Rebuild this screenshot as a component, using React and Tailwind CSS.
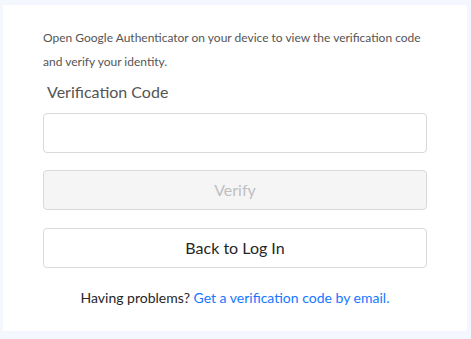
export default function App() {
  return (
    <div className="min-h-screen w-full bg-[#f4f7fe] pt-[5px] pl-[3px] pr-[4px]" style={{ fontFamily: 'Lato, "Open Sans", sans-serif' }}>
      <div className="w-[464px] h-[326px] bg-white px-[40px] pt-[21px]">
        <p className="text-[12px] leading-[24px] text-[#555]">
          Open Google Authenticator on your device to view the verification code and verify your identity.
        </p>
        <div className="mt-[6px] pl-[4px] text-[16px] leading-[24px] text-[#555]">Verification Code</div>
        <input className="mt-[9px] block w-[384px] h-[40px] rounded-[4px] border border-[#d9d9d9] bg-white px-3 outline-none" />
        <button disabled className="mt-[17px] flex w-[384px] h-[40px] items-center justify-center rounded-[4px] border border-[#d9d9d9] bg-[#f5f5f5] text-[16px] text-[#bfbfbf]">
          Verify
        </button>
        <button className="mt-[18px] flex w-[384px] h-[40px] items-center justify-center rounded-[4px] border border-[#d9d9d9] bg-white text-[16px] text-[#262626]">
          Back to Log In
        </button>
        <p className="mt-[19px] text-center text-[14px] leading-[22px] text-[#262626]">
          Having problems? <a className="text-[#1677ff]" href="#">Get a verification code by email.</a>
        </p>
      </div>
    </div>
  )
}
